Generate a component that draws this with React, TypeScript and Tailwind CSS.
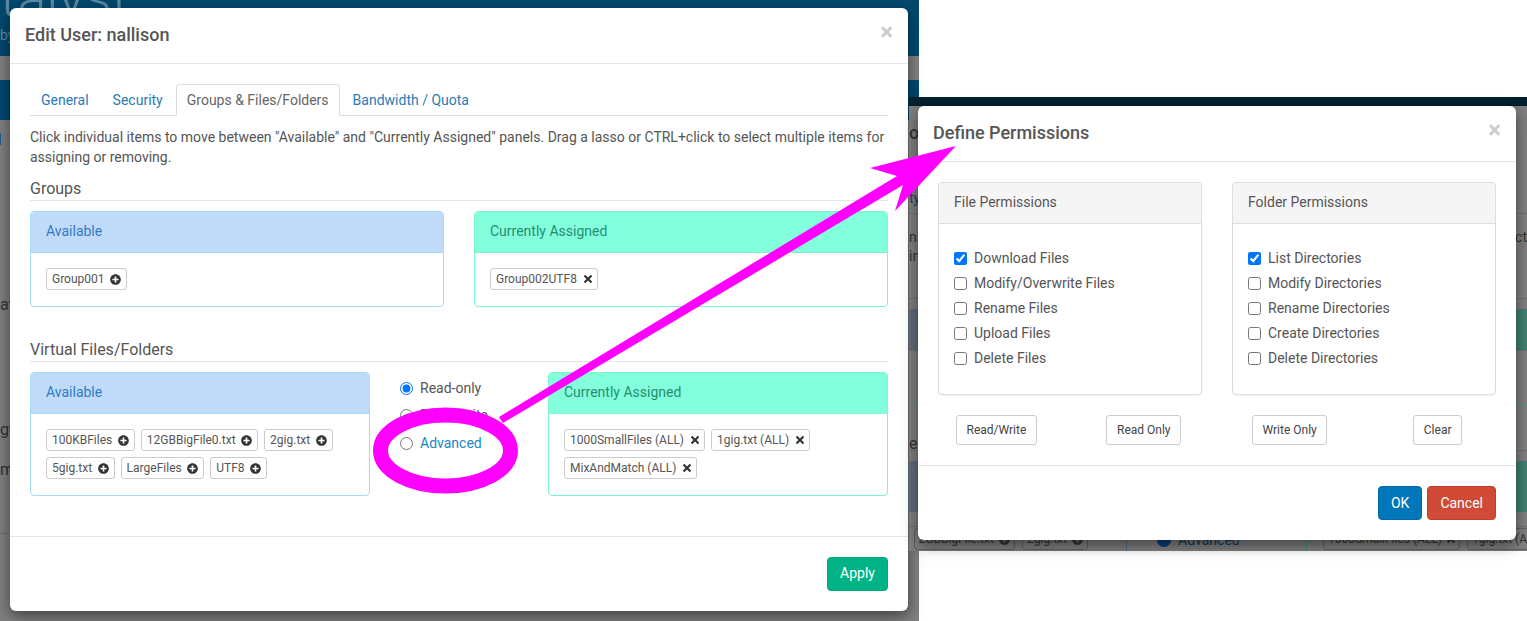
import type { ReactNode } from "react";
import { FaPlusCircle, FaTimes } from "react-icons/fa";

function Tag({ label, remove }: { label: string; remove?: boolean }) {
  return (
    <span className="inline-flex h-[22px] items-center rounded-[3px] border border-[#ccc] bg-white px-[5px] text-[12px] text-[#555]">
      {label}
      {remove ? (
        <FaTimes className="ml-[7px] h-[12px] w-[8px] text-[#333]" />
      ) : (
        <FaPlusCircle className="ml-[5.5px] h-[11px] w-[11px] text-[#333]" />
      )}
    </span>
  );
}

function AvailablePanel({ width, children }: { width: string; children: ReactNode }) {
  return (
    <div className={`${width} shrink-0 overflow-hidden rounded-[4px] border border-[#a4dcf7] bg-white`}>
      <div className="flex h-[41px] items-center border-b border-[#a4dcf7] bg-[#bfdbf7] px-[15px] pb-[2px] text-[#337ac4]">
        Available
      </div>
      <div className="flex flex-wrap gap-x-[6px] gap-y-[6px] px-[15px] pt-[15px] pb-[16px]">{children}</div>
    </div>
  );
}

function AssignedPanel({ width, children }: { width: string; children: ReactNode }) {
  return (
    <div className={`${width} shrink-0 overflow-hidden rounded-[4px] border border-[#7ff5cf] bg-white`}>
      <div className="flex h-[41px] items-center border-b border-[#7ff5cf] bg-[#84ffdc] px-[15px] pb-[2px] text-[#1f8f72]">
        Currently Assigned
      </div>
      <div className="flex flex-wrap gap-x-[6px] gap-y-[6px] px-[15px] pt-[15px] pb-[16px]">{children}</div>
    </div>
  );
}

function Legend({ children }: { children: ReactNode }) {
  return (
    <div className="mb-[10px] h-[23px] border-b border-[#e5e5e5] text-[16px] leading-[21px] text-[#555]">
      {children}
    </div>
  );
}

function ModalHeader({ title }: { title: string }) {
  return (
    <div className="flex h-[56px] shrink-0 items-center justify-between border-b border-[#e5e5e5] px-[15px] pb-[2px]">
      <span className="text-[18px] font-medium text-[#555]">{title}</span>
      <span className="-mt-[5px] text-[24px] leading-none font-bold text-[#ccc]">×</span>
    </div>
  );
}

function PermissionPanel({ title, items }: { title: string; items: string[] }) {
  return (
    <div className="h-[213px] overflow-hidden rounded-[4px] border border-[#ddd] bg-white shadow-[0_1px_1px_rgba(0,0,0,0.05)]">
      <div className="flex h-[41px] items-center border-b border-[#ddd] bg-[#f5f5f5] px-[15px] pb-[2px] text-[#555]">{title}</div>
      <div className="flex flex-col gap-[5px] px-[15px] pt-[24px]">
        {items.map((item, i) => (
          <label key={item} className="flex h-[20px] items-center gap-[7px] text-[#555]">
            <input type="checkbox" defaultChecked={i === 0} className="h-[13px] w-[13px]" />
            {item}
          </label>
        ))}
      </div>
    </div>
  );
}

function SmallButton({ label }: { label: string }) {
  return (
    <button className="h-[30px] rounded-[3px] border border-[#ccc] bg-white px-[9.5px] text-[12px] text-[#444]">
      {label}
    </button>
  );
}

// dimmed tag peeking out below the second dialog
function DimTag({ label, remove }: { label: string; remove?: boolean }) {
  return (
    <span className="flex h-[22px] shrink-0 items-center gap-[5px] rounded-[3px] border border-[#606060] px-[4px] text-[12px] whitespace-nowrap">
      {label}
      {remove ? <FaTimes className="h-[12px] w-[8px]" /> : <FaPlusCircle className="h-[11px] w-[11px]" />}
    </span>
  );
}

// dimmed page behind the first dialog
function LeftBackdrop() {
  return (
    <div className="flex h-full w-[919px] flex-col bg-[#808080]">
      <div className="h-[56px] overflow-hidden bg-[#03496e] text-[#5d8aa3]">
        <div className="-mt-[32px] text-[54px] leading-[60px] font-light">talyst</div>
        <div className="text-[14px] leading-[14px]">by</div>
      </div>
      <div className="h-[24px]" />
      <div className="h-[40px] bg-[#00486e]" />
      <div className="mt-[13px] h-[12px] w-px bg-[#1c5f8c]" />
      <div className="mt-[150px] text-[16px] leading-[20px] text-[#333]">at</div>
      <div className="mt-[105px] text-[16px] leading-[20px] text-[#333]">gt</div>
      <div className="mt-[20px] text-[16px] leading-[20px] text-[#333]">m</div>
      <div className="mt-[53px] border-t border-[#707070]" />
    </div>
  );
}

// dimmed page behind the second dialog
function RightBackdrop() {
  return (
    <div className="flex h-full flex-col overflow-hidden bg-[#808080] text-[#333]">
      <div className="h-[9px] shrink-0 bg-[#02212f]" />
      <div className="flex h-[108px] shrink-0 flex-col justify-end border-b border-[#707070]">
        <div className="mb-[44px] text-[18px] leading-[22px] font-medium">o</div>
        <div className="mb-[5px] text-[14px] leading-[20px] text-[#1c3f5c]">ty</div>
      </div>
      <div className="flex h-[85px] shrink-0 justify-between border-b border-[#707070] pt-[14px] text-[14px] leading-[19px]">
        <div>
          <div>ns</div>
          <div>in</div>
        </div>
        <div>ct</div>
      </div>
      <div className="mt-[10px] flex h-[42px] shrink-0 justify-between border-b border-[#707070]">
        <div className="w-[218px] bg-[#606e7c]" />
        <div className="w-[220px] bg-[#428071]" />
      </div>
      <div className="flex h-[54px] shrink-0 justify-between border-b border-[#4f9f89]">
        <div className="w-px" />
      </div>
      <div className="flex h-[46px] shrink-0 items-end border-b border-[#707070] text-[16px] leading-[12px]">e</div>
      <div className="mt-[10px] flex h-[51px] shrink-0 justify-between">
        <div className="w-[218px] bg-[#606e7c]" />
        <div className="w-[220px] bg-[#428071]" />
      </div>
      <div className="mt-[14px] flex h-[25px] shrink-0 border-t border-[#707070]">
        <div className="flex w-[218px] shrink-0 justify-end gap-[7px] overflow-hidden border-r border-[#4f6f86] pt-[1px] pr-[38px]">
          <DimTag label="2GBBigFile.txt" />
          <DimTag label="2gig.txt" />
        </div>
        <div className="flex w-[180px] shrink-0 items-start gap-[7px] border-r border-[#3f9078] pt-[3px] pl-[30px] text-[14px] leading-[20px] text-[#12395c]">
          <span className="mt-[3px] h-[14px] w-[14px] shrink-0 rounded-full border-[3px] border-[#0a3d80] bg-[#0a3d80]" />
          Advanced
        </div>
        <div className="flex gap-[7px] overflow-hidden pt-[1px] pl-[16px]">
          <DimTag label="1000SmallFiles (ALL)" remove />
          <DimTag label="1gig.txt (ALL)" remove />
        </div>
      </div>
    </div>
  );
}

function EditUserModal() {
  return (
    <div className="absolute top-[8px] left-[10px] flex h-[603px] w-[898px] flex-col rounded-[6px] bg-white shadow-[0_5px_15px_rgba(0,0,0,0.5)]">
      <ModalHeader title="Edit User: nallison" />
      <div className="flex-1 px-[20px] pt-[20px]">
        <div className="flex h-[32px] items-end border-b border-[#ddd] text-[#2a7ab8]">
          <div className="px-[11px] leading-[30px]">General</div>
          <div className="ml-[2px] px-[11px] leading-[30px]">Security</div>
          <div className="mb-[-1px] ml-[2px] h-[32px] rounded-t-[4px] border border-b-0 border-[#ddd] bg-white px-[10px] leading-[30px] text-[#666]">
            Groups &amp; Files/Folders
          </div>
          <div className="ml-[3px] px-[10px] leading-[30px]">Bandwidth / Quota</div>
        </div>
        <p className="mt-[11px] leading-[20px] text-[#555]">
          Click individual items to move between "Available" and "Currently Assigned" panels. Drag a lasso or CTRL+click
          to select multiple items for assigning or removing.
        </p>
        <div className="mt-[11px]">
          <Legend>Groups</Legend>
          <div className="flex justify-between">
            <AvailablePanel width="w-[414px]">
              <Tag label="Group001" />
            </AvailablePanel>
            <AssignedPanel width="w-[414px]">
              <Tag label="Group002UTF8" remove />
            </AssignedPanel>
          </div>
        </div>
        <div className="mt-[32px]">
          <Legend>Virtual Files/Folders</Legend>
          <div className="flex">
            <AvailablePanel width="w-[340px]">
              {["100KBFiles", "12GBBigFile0.txt", "2gig.txt", "5gig.txt", "LargeFiles", "UTF8"].map((name) => (
                <Tag key={name} label={name} />
              ))}
            </AvailablePanel>
            <div className="flex w-[178px] flex-col gap-[7.5px] pt-[6px] pl-[30px] text-[#555]">
              <label className="flex h-[20px] items-center gap-[7px]">
                <input type="radio" name="access" defaultChecked className="h-[13px] w-[13px]" />
                Read-only
              </label>
              <label className="flex h-[20px] items-center gap-[7px]">
                <input type="radio" name="access" className="h-[13px] w-[13px]" />
                Read/write
              </label>
              <label className="flex h-[20px] items-center gap-[7px] text-[#1a87c9]">
                <input type="radio" name="access" className="h-[13px] w-[13px]" />
                Advanced
              </label>
            </div>
            <AssignedPanel width="w-[340px]">
              {["1000SmallFiles (ALL)", "1gig.txt (ALL)", "MixAndMatch (ALL)"].map((name) => (
                <Tag key={name} label={name} remove />
              ))}
            </AssignedPanel>
          </div>
        </div>
      </div>
      <div className="flex justify-end border-t border-[#e5e5e5] p-[20px]">
        <button className="h-[34px] rounded-[4px] border border-[#00a67c] bg-[#00b386] px-[12px] pb-[2px] text-white">Apply</button>
      </div>
    </div>
  );
}

function PermissionsModal() {
  return (
    <div className="absolute top-[9px] left-[9px] flex h-[434px] w-[598px] flex-col rounded-[6px] bg-white shadow-[0_5px_15px_rgba(0,0,0,0.5)]">
      <ModalHeader title="Define Permissions" />
      <div className="flex-1 px-[20px] pt-[20px]">
        <div className="grid grid-cols-2 gap-[30px]">
          <div>
            <PermissionPanel
              title="File Permissions"
              items={["Download Files", "Modify/Overwrite Files", "Rename Files", "Upload Files", "Delete Files"]}
            />
            <div className="mt-[20px] flex justify-between pr-[21px] pl-[18px]">
              <SmallButton label="Read/Write" />
              <SmallButton label="Read Only" />
            </div>
          </div>
          <div>
            <PermissionPanel
              title="Folder Permissions"
              items={["List Directories", "Modify Directories", "Rename Directories", "Create Directories", "Delete Directories"]}
            />
            <div className="mt-[20px] flex justify-between pr-[34px] pl-[20px]">
              <SmallButton label="Write Only" />
              <SmallButton label="Clear" />
            </div>
          </div>
        </div>
      </div>
      <div className="flex justify-end gap-[5px] border-t border-[#e5e5e5] p-[20px]">
        <button className="h-[34px] rounded-[4px] border border-[#0069a8] bg-[#0077b8] px-[12px] text-white">OK</button>
        <button className="h-[34px] rounded-[4px] border border-[#c23f2c] bg-[#d04a36] px-[12px] text-white">Cancel</button>
      </div>
    </div>
  );
}

export default function App() {
  return (
    <div className="relative h-[621px] w-[1527px] overflow-hidden bg-white font-['Roboto',sans-serif] text-[14px]">
      {/* first screenshot */}
      <div className="absolute top-0 left-0 h-[621px] w-[919px]">
        <LeftBackdrop />
        <EditUserModal />
      </div>

      {/* second screenshot */}
      <div className="absolute top-[97px] left-[909px] h-[454px] w-[618px]">
        <RightBackdrop />
        <PermissionsModal />
      </div>

      {/* hand-drawn annotation */}
      <svg className="pointer-events-none absolute inset-0" width="1527" height="621" viewBox="0 0 1527 621">
        <ellipse cx="445.5" cy="450.5" rx="65" ry="35.5" fill="none" stroke="#ff00ff" strokeWidth="15" />
        <polygon fill="#ff00ff" points="499,417 897,176 870,168 956,146 895,211 903,185 503,423" />
      </svg>
    </div>
  );
}
